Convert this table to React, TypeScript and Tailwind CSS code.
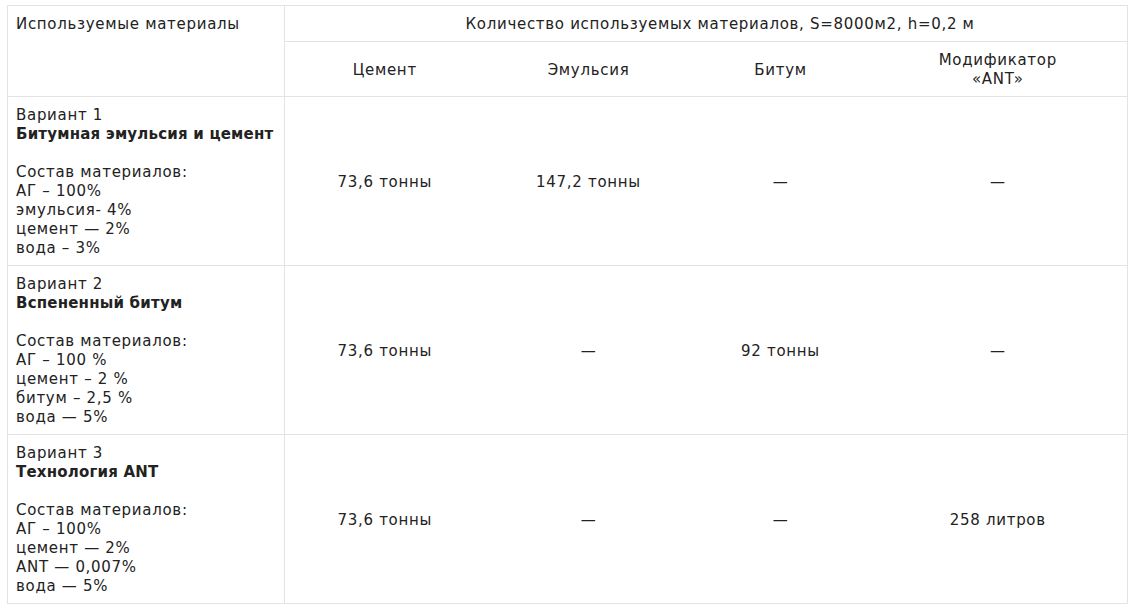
import React from "react";

type Row = {
  variant: string;
  title: string;
  parts: string[];
  values: string[];
};

const rows: Row[] = [
  {
    variant: "Вариант 1",
    title: "Битумная эмульсия и цемент",
    parts: ["АГ – 100%", "эмульсия- 4%", "цемент — 2%", "вода – 3%"],
    values: ["73,6 тонны", "147,2 тонны", "—", "—"],
  },
  {
    variant: "Вариант 2",
    title: "Вспененный битум",
    parts: ["АГ – 100 %", "цемент – 2 %", "битум – 2,5 %", "вода — 5%"],
    values: ["73,6 тонны", "—", "92 тонны", "—"],
  },
  {
    variant: "Вариант 3",
    title: "Технология ANT",
    parts: ["АГ – 100%", "цемент — 2%", "ANT — 0,007%", "вода — 5%"],
    values: ["73,6 тонны", "—", "—", "258 литров"],
  },
];

// only horizontal rules inside; vertical lines at the outer edges and after the first column
const side = "border-y border-[#e3e3e3] px-2 pt-[9px] pb-[7px]";
const first = "border border-[#e3e3e3] px-2 pt-[9px] pb-[7px]";
const last = "border-y border-r border-[#e3e3e3] px-2 pt-[9px] pb-[7px]";

export default function App() {
  return (
    <div className="min-h-[608px] bg-white pl-[7px] pt-[5px] font-['DejaVu_Sans',sans-serif] text-[15px] leading-[19px] tracking-[0.7px] text-[#222]">
      <table className="w-[1120px] table-fixed border-collapse">
        <colgroup>
          <col className="w-[277px]" />
          <col className="w-[200px]" />
          <col className="w-[208px]" />
          <col className="w-[176px]" />
          <col className="w-[259px]" />
        </colgroup>
        <thead>
          <tr>
            <th rowSpan={2} className={`${first} text-left align-top font-normal`}>
              Используемые материалы
            </th>
            <th colSpan={4} className={`${last} pl-[36px] text-center font-normal`}>
              Количество используемых материалов, S=8000м2, h=0,2 м
            </th>
          </tr>
          <tr>
            <th className={`${side} text-center font-normal`}>Цемент</th>
            <th className={`${side} text-center font-normal`}>Эмульсия</th>
            <th className={`${side} text-center font-normal`}>Битум</th>
            <th className={`${last} text-center font-normal`}>
              Модификатор
              <br />
              «ANT»
            </th>
          </tr>
        </thead>
        <tbody>
          {rows.map((row) => (
            <tr key={row.variant}>
              <td className={`${first} align-top`}>
                <div>{row.variant}</div>
                <div className="font-bold tracking-[0.2px]">{row.title}</div>
                <div className="h-[19px]" />
                <div>Состав материалов:</div>
                {row.parts.map((p) => (
                  <div key={p}>{p}</div>
                ))}
              </td>
              {row.values.map((v, i) => (
                <td key={i} className={`${i === 3 ? last : side} text-center align-middle`}>
                  {v}
                </td>
              ))}
            </tr>
          ))}
        </tbody>
      </table>
    </div>
  );
}
